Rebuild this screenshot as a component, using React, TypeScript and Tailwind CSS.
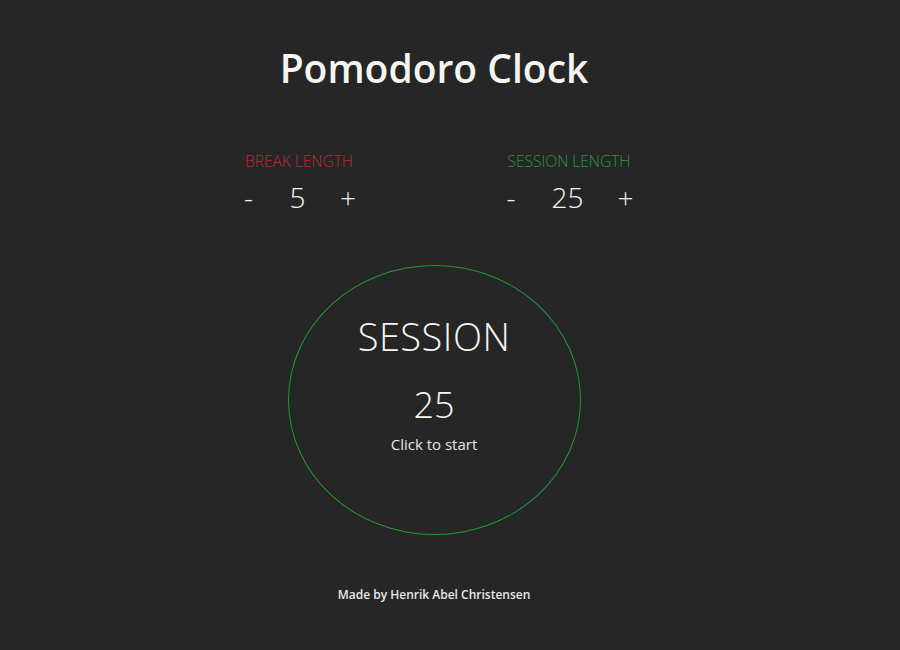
export default function App() {
  return (
    <div
      className="min-h-[650px] bg-[#262626] text-[#f5f5f0]"
      style={{ fontFamily: '"Open Sans", "Noto Sans", sans-serif' }}
    >
      <div className="w-[868px] flex flex-col items-center pt-[44px]">
        <h1 className="text-[39px] font-semibold leading-[48px]">Pomodoro Clock</h1>

        <div className="flex gap-[120px] mt-[59px]">
          <Setting label="BREAK LENGTH" value={5} color="text-[#c4262f]" />
          <Setting label="SESSION LENGTH" value={25} color="text-[#239a3c]" />
        </div>

        <div className="mt-[50px] w-[293px] h-[270px] rounded-[50%] border border-[#22993a] flex flex-col items-center">
          <div className="mt-[46px] text-[38px] font-light leading-[48px] tracking-[0.5px]">SESSION</div>
          <div className="mt-[23px] text-[36px] font-light leading-[44px]">25</div>
          <div className="mt-[7px] text-[15px] leading-[20px] text-[#e6e6e6]">Click to start</div>
        </div>

        <div className="mt-[51px] text-[12px] font-semibold text-[#e8e8e8]">
          Made by Henrik Abel Christensen
        </div>
      </div>
    </div>
  );
}

function Setting({ label, value, color }: { label: string; value: number; color: string }) {
  return (
    <div className="w-[150px] flex justify-center">
      <div className="inline-flex flex-col">
        <div className={`text-[15.5px] font-light leading-[20px] ${color}`}>{label}</div>
        <div className="flex justify-between items-center mt-[8px] -mx-[3px] text-[28px] font-light leading-[36px]">
          <span className="px-[2px]">-</span>
          <span>{value}</span>
          <span>+</span>
        </div>
      </div>
    </div>
  );
}
